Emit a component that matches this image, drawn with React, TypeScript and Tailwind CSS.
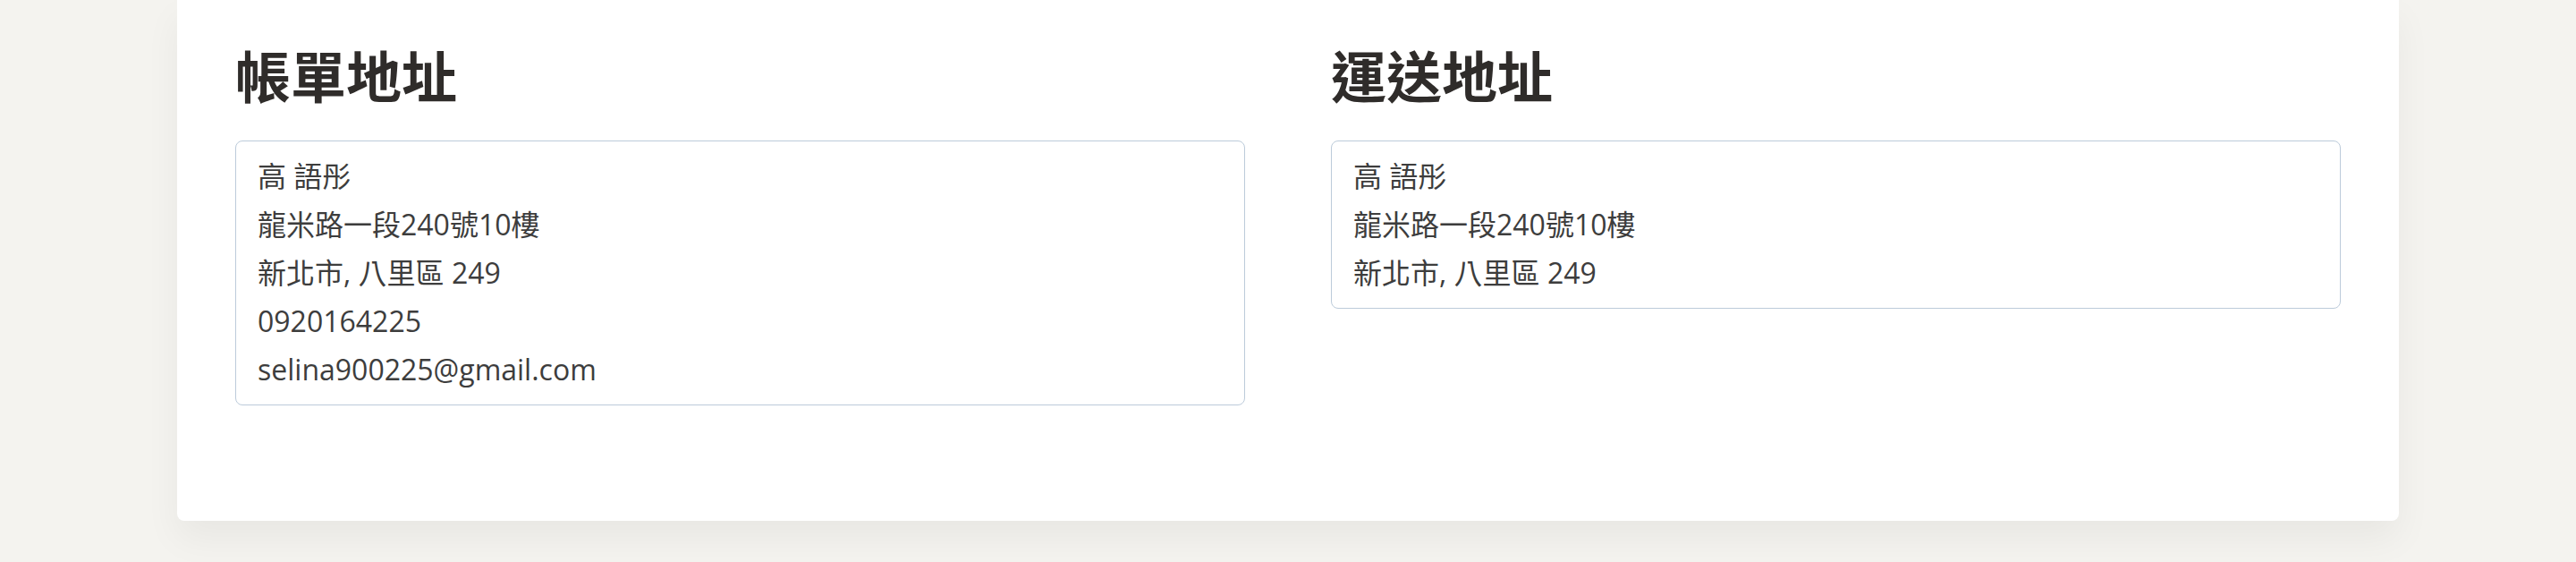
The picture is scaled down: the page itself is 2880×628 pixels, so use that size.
const billing = ['高 語彤', '龍米路一段240號10樓', '新北市, 八里區 249', '0920164225', 'selina900225@gmail.com']
const shipping = ['高 語彤', '龍米路一段240號10樓', '新北市, 八里區 249']

function AddressBlock({ title, lines }: { title: string; lines: string[] }) {
  return (
    <div>
      <h2 className="text-[62px] leading-[72px] font-bold text-[#2f2c2a] mb-[35px]">{title}</h2>
      <div className="border border-[#bccbda] rounded-lg px-[24px] py-[12px] text-[32px] leading-[54px] text-[#3d3d3d]">
        {lines.map((l, i) => (
          <div key={i}>{l}</div>
        ))}
      </div>
    </div>
  )
}

export default function App() {
  return (
    <div
      className="min-h-[628px] bg-[#f4f3ef] overflow-hidden"
      style={{ fontFamily: '"Open Sans", "Noto Sans CJK TC", sans-serif' }}
    >
      <div className="mx-[198px] bg-white rounded-b-lg shadow-[0_20px_40px_rgba(0,0,0,0.05)] px-[65px] pt-[50px] pb-[129px]">
        <div className="grid grid-cols-2 gap-x-[96px] items-start">
          <AddressBlock title="帳單地址" lines={billing} />
          <AddressBlock title="運送地址" lines={shipping} />
        </div>
      </div>
    </div>
  )
}
